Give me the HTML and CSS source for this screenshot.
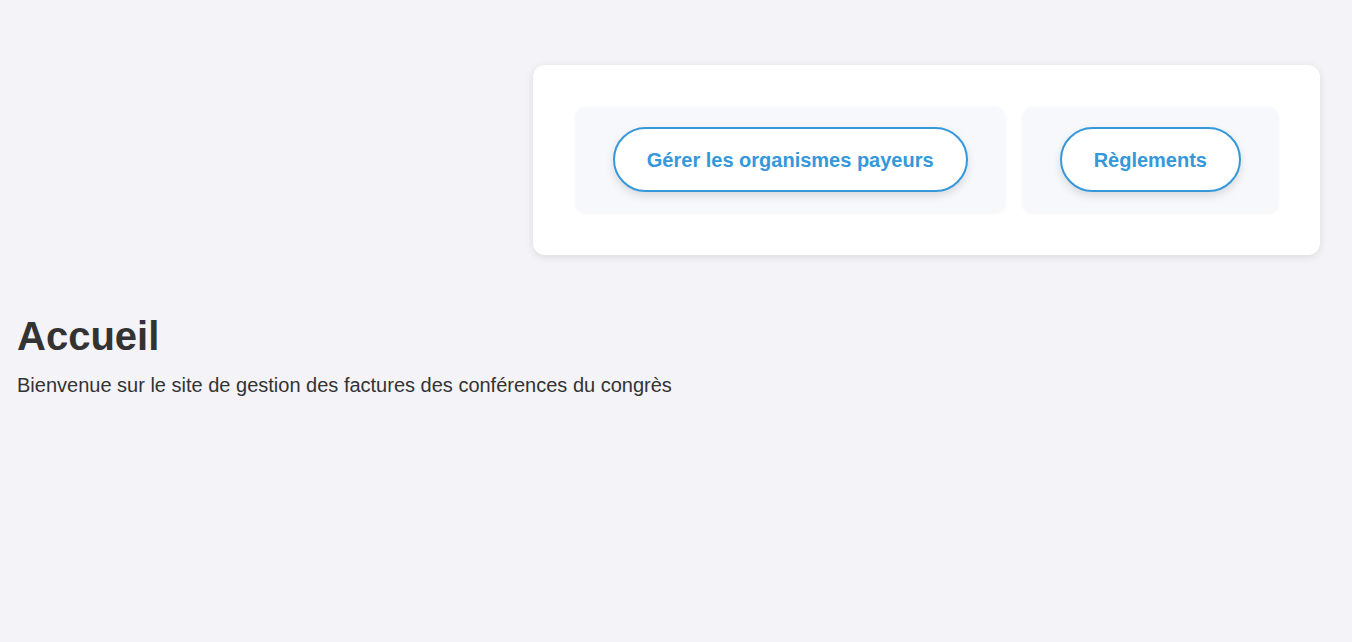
FILE: index.html
```html
<!DOCTYPE html>
<html lang="fr">
<head>
<meta charset="utf-8">
<title>Accueil</title>
<link rel="stylesheet" href="styles.css">
</head>
<body>
<header class="top">
  <nav class="panel">
    <div class="card"><a class="btn" href="#">Gérer les organismes payeurs</a></div>
    <div class="card"><a class="btn" href="#">Règlements</a></div>
  </nav>
</header>
<main class="content">
  <h1 class="title">Accueil</h1>
  <p class="lead">Bienvenue sur le site de gestion des factures des conférences du congrès</p>
</main>
</body>
</html>
```
FILE: styles.css
```css
html, body {
  margin: 0;
  padding: 0;
}
body {
  background: #f4f4f8;
  font-family: "Liberation Sans", Arial, sans-serif;
  color: #333333;
}
.top {
  display: flex;
  justify-content: flex-end;
  padding: 65px 32px 0 0;
}
.panel {
  display: flex;
  gap: 18px;
  background: #ffffff;
  border-radius: 12px;
  padding: 42px 42px 43px 43px;
  box-shadow: 0 2px 8px rgba(0, 0, 0, 0.1);
}
.card {
  background: #f7f8fc;
  border-radius: 10px;
  padding: 20px 37px;
  box-shadow: 0 1px 4px rgba(0, 0, 0, 0.06);
  display: flex;
  align-items: center;
}
.btn {
  display: block;
  border: 2px solid #3498db;
  border-radius: 33px;
  background: #ffffff;
  color: #3498db;
  font-weight: bold;
  font-size: 20px;
  line-height: 23px;
  padding: 20px 32px 18px 32px;
  text-decoration: none;
  box-shadow: 0 4px 8px rgba(0, 0, 0, 0.12);
}
.content {
  padding: 0 17px;
  margin-top: 58px;
}
.title {
  font-size: 40px;
  margin: 0 0 15px 0;
  line-height: 46px;
}
.lead {
  font-size: 20px;
  line-height: 23px;
  margin: 0;
}
```
